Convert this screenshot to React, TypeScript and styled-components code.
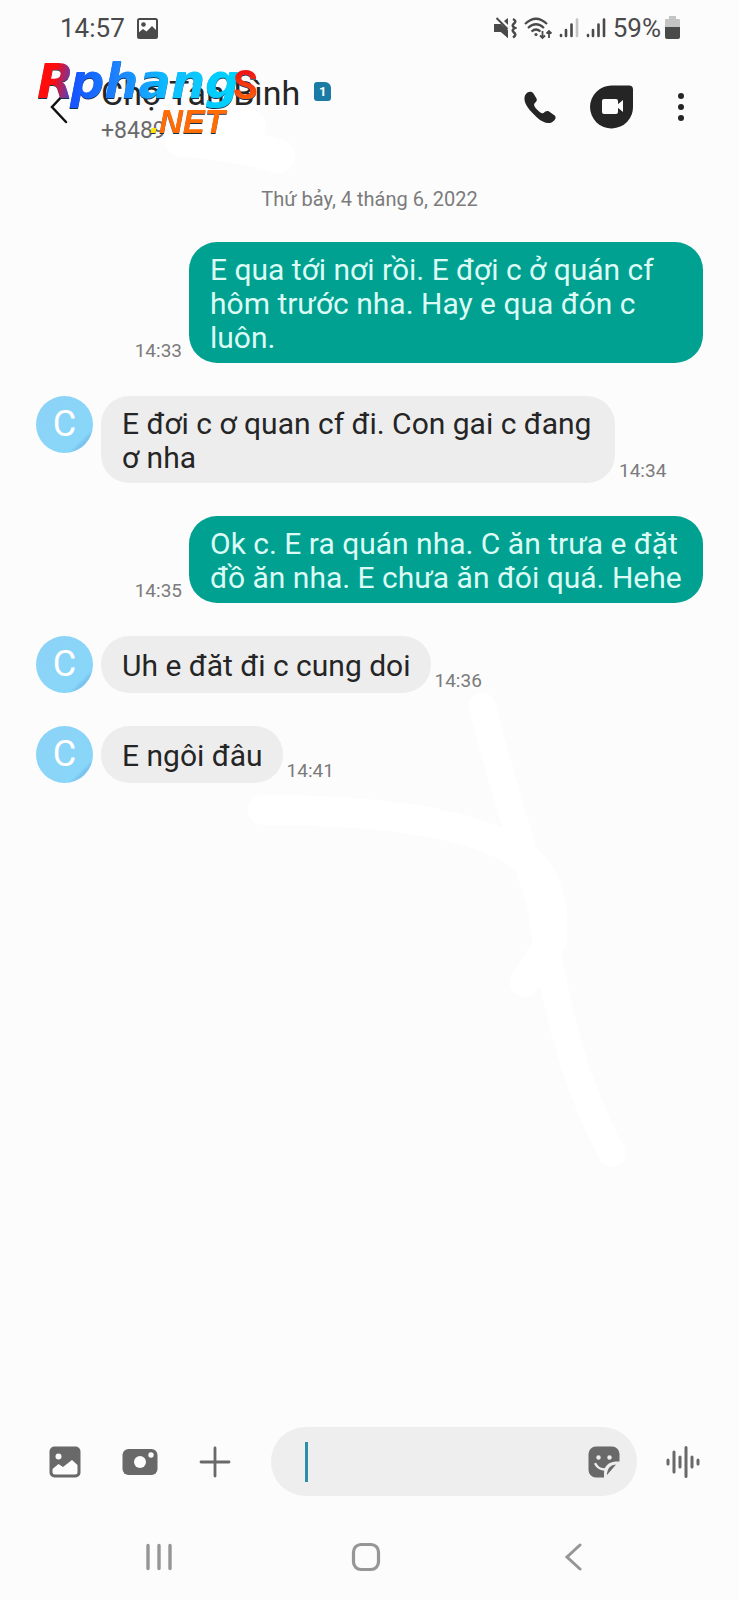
import React from "react";
import styled, { createGlobalStyle } from "styled-components";

const GlobalStyle = createGlobalStyle`
  * { box-sizing: border-box; }
  body {
    margin: 0;
    background: #fcfcfc;
    color: #252525;
    font-family: Roboto, "Noto Sans", sans-serif;
  }
`;

const Screen = styled.div`
  position: relative;
  display: flex;
  flex-direction: column;
  min-height: 100vh;
  overflow: hidden;
`;

const StatusBar = styled.div`
  display: flex;
  align-items: center;
  justify-content: space-between;
  height: 56px;
  padding: 0 58px 0 60px;
  color: #4a4a4a;
  font-size: 26px;
  line-height: 32px;
`;

const StatusGroup = styled.div<{ $gap: number }>`
  display: flex;
  align-items: center;
  gap: ${(p) => p.$gap}px;
`;

const Header = styled.header`
  position: relative;
  display: flex;
  align-items: center;
  height: 102px;
  padding: 0 33px 0 36px;
`;

const IconButton = styled.button<{ $w: number; $h: number; $color?: string }>`
  display: flex;
  align-items: center;
  justify-content: center;
  flex: none;
  width: ${(p) => p.$w}px;
  height: ${(p) => p.$h}px;
  padding: 0;
  border: 0;
  background: none;
  color: ${(p) => p.$color ?? "#252525"};
  cursor: pointer;
`;

const Contact = styled.div`
  display: flex;
  flex: 1;
  flex-direction: column;
  gap: 4px;
  min-width: 0;
  padding: 4px 0 0 19px;
`;

const NameRow = styled.div`
  display: flex;
  align-items: center;
  gap: 14px;
`;

const Name = styled.h1`
  margin: 0;
  font-size: 34px;
  font-weight: 400;
  line-height: 40px;
  white-space: nowrap;
`;

const SimBadge = styled.span`
  display: flex;
  align-items: center;
  justify-content: center;
  width: 17px;
  height: 19px;
  margin-bottom: 4px;
  border-radius: 3px 6px 3px 3px;
  background: #1a7ba4;
  color: #fff;
  font-size: 13px;
  font-weight: 700;
  line-height: 19px;
`;

const Phone = styled.div`
  color: #6a6a6a;
  font-size: 23px;
  line-height: 28px;
`;

const Actions = styled.div`
  display: flex;
  align-items: center;
  gap: 12px;
`;

const Logo = styled.svg`
  position: absolute;
  top: -20px;
  left: 20px;
  pointer-events: none;
`;

const Thread = styled.main`
  position: relative;
  display: flex;
  flex: 1;
  flex-direction: column;
  gap: 33px;
  padding: 31px 36px;
`;

const DateLabel = styled.div`
  color: #7b7b7b;
  font-size: 20px;
  line-height: 20px;
  text-align: center;
`;

const Row = styled.div<{ $own: boolean }>`
  display: flex;
  flex-direction: ${(p) => (p.$own ? "row-reverse" : "row")};
  align-items: flex-end;
  gap: ${(p) => (p.$own ? 7 : 4)}px;
`;

const Avatar = styled.div`
  display: flex;
  align-items: center;
  justify-content: center;
  align-self: flex-start;
  flex: none;
  width: 57px;
  height: 57px;
  margin-right: 4px;
  border-radius: 50%;
  background: linear-gradient(135deg, #8dd3f6 0%, #88d6f9 78%, #7cc4f0 82%);
  color: #fff;
  font-size: 36px;
  line-height: 57px;
`;

const Bubble = styled.div<{ $own: boolean }>`
  display: flex;
  align-items: center;
  max-width: 514px;
  min-height: 57px;
  padding: 11px 20px 8px 21px;
  border-radius: 28px;
  background: ${(p) => (p.$own ? "#00a191" : "#ededed")};
  color: ${(p) => (p.$own ? "#dcfbf5" : "#252525")};
  font-size: 30px;
  line-height: 34px;
`;

const Time = styled.time`
  flex: none;
  color: #7b7b7b;
  font-size: 19px;
  line-height: 24px;
`;

const Composer = styled.form`
  display: flex;
  align-items: center;
  padding: 0 29px 0 27px;
`;

const Field = styled.label`
  display: flex;
  align-items: center;
  flex: 1;
  min-width: 0;
  height: 69px;
  margin: 0 19px;
  padding: 0 9px 0 34px;
  border-radius: 35px;
  background: #eeeeee;
`;

const Caret = styled.span`
  flex: none;
  width: 3px;
  height: 40px;
  background: #2b8fac;
`;

const TextInput = styled.input`
  flex: 1;
  min-width: 0;
  border: 0;
  outline: 0;
  background: transparent;
  font: inherit;
  font-size: 30px;
`;

const NavBar = styled.nav`
  display: flex;
  align-items: center;
  justify-content: space-between;
  height: 104px;
  padding: 18px 126px 0 119px;
`;

const Smudges = styled.svg`
  position: absolute;
  top: 0;
  left: 0;
  pointer-events: none;
`;

type Message = { text: string; time: string; own: boolean };

const messages: Message[] = [
  { text: "E qua tới nơi rồi. E đợi c ở quán cf hôm trước nha. Hay e qua đón c luôn.", time: "14:33", own: true },
  { text: "E đơi c ơ quan cf đi. Con gai c đang ơ nha", time: "14:34", own: false },
  { text: "Ok c. E ra quán nha. C ăn trưa e đặt đồ ăn nha. E chưa ăn đói quá. Hehe", time: "14:35", own: true },
  { text: "Uh e đăt đi c cung doi", time: "14:36", own: false },
  { text: "E ngôi đâu", time: "14:41", own: false },
];

const Signal = ({ weakLast }: { weakLast?: boolean }) => (
  <svg width="20" height="22" viewBox="0 0 20 22" stroke="#4a4a4a" strokeWidth="2.600" strokeLinecap="round">
    <path d="M2 18v1M7 13v6M12.500 7.500v11.500" />
    <path d="M18 2.500v16.500" stroke={weakLast ? "#c4c4c4" : "#4a4a4a"} />
  </svg>
);

const SiteLogo = () => (
  <Logo width="270" height="130" viewBox="-10 -20 270 130" aria-label="Rphangs.NET">
    <defs>
      <linearGradient id="logoRed" x1="0" x2="1" y1="0" y2="0.3">
        <stop offset="0.55" stopColor="#ff0a0a" />
        <stop offset="1" stopColor="#5a3fc0" />
      </linearGradient>
      <linearGradient id="logoBlue" x1="0" x2="1" y1="0" y2="0">
        <stop offset="0" stopColor="#1450ff" />
        <stop offset="0.3" stopColor="#1c86ff" />
        <stop offset="0.6" stopColor="#0cc0ff" />
        <stop offset="1" stopColor="#00d4ff" />
      </linearGradient>
      <linearGradient id="logoS" x1="0" x2="0" y1="0" y2="1">
        <stop offset="0.2" stopColor="#f01414" />
        <stop offset="1" stopColor="#ff7a00" />
      </linearGradient>
      <filter id="logoShadow" x="-5%" y="-10%" width="110%" height="130%">
        <feDropShadow dx="0" dy="1" stdDeviation="0.500" floodColor="#15324a" />
      </filter>
    </defs>
    <g filter="url(#logoShadow)" fontFamily="'DejaVu Sans', sans-serif" fontWeight="700" fontStyle="italic">
      <text x="7" y="42" fontSize="48" fill="url(#logoRed)">R</text>
      <text x="40" y="42" fontSize="48" fill="url(#logoBlue)">phang</text>
      <text x="203" y="43" fontSize="40" fontFamily="Roboto, sans-serif" fontStyle="normal" fill="url(#logoS)">S</text>
      <g fontFamily="'Liberation Sans', sans-serif" fontSize="33">
        <text x="120" y="77" fill="#ffe600">.</text>
        <text x="129" y="77" fill="#ff6d05">NET</text>
      </g>
    </g>
  </Logo>
);

export default function App() {
  return (
    <Screen>
      <GlobalStyle />
      <Smudges width="739" height="1200" viewBox="0 0 739 1200" fill="none" stroke="#fff" strokeLinecap="round" strokeLinejoin="round" aria-hidden="true">
        <path d="M182 140Q230 142 278 156" strokeWidth="34" />
        <path d="M200 135L250 126" strokeWidth="32" />
        <path d="M263 810Q470 810 530 862Q556 890 552 940L525 982" strokeWidth="30" />
        <path d="M482 706Q515 830 540 900Q560 1060 612 1153" strokeWidth="27" />
      </Smudges>

      <StatusBar>
        <StatusGroup $gap={12}>
          <span>14:57</span>
          <svg width="21" height="21" viewBox="0 0 21 21">
            <rect x="1" y="1" width="19" height="19" rx="1.500" fill="none" stroke="#4a4a4a" strokeWidth="2" />
            <circle cx="6.500" cy="6.500" r="2.300" fill="#4a4a4a" />
            <path d="M1 15l5-4 3.500 2.500L15 8l5 5v7H1z" fill="#4a4a4a" />
          </svg>
        </StatusGroup>
        <StatusGroup $gap={7}>
          <svg width="23" height="22" viewBox="0 0 23 22" fill="#4a4a4a">
            <path d="M0 7h4l10 8v6l-7-6H0z" />
            <path d="M0 7h7l7 6v8l-7-6H0z" />
            <path d="M10 4l4-3v7z" />
            <path d="M2.500 1l11 11" stroke="#4a4a4a" strokeWidth="2" />
            <path d="M19 2q4 2 1 4.500t1 4.500q-4 2-1 4.500t-1 5" fill="none" stroke="#4a4a4a" strokeWidth="2.500" />
          </svg>
          <svg width="28" height="23" viewBox="0 0 28 23" fill="none" stroke="#4a4a4a" strokeWidth="2.200">
            <path d="M1 7Q12-3.500 23 7M4 11q8-7.500 16 0M7.500 14.500q4.500-4 9 0" />
            <circle cx="12" cy="17.500" r="1.600" fill="#4a4a4a" stroke="none" />
            <path d="M18.500 14v7M16 18.500l2.500 2.500 2.500-2.500M25 21v-7M22.500 16.500L25 14l2.500 2.500" strokeWidth="1.800" />
          </svg>
          <Signal weakLast />
          <Signal />
          <StatusGroup $gap={4}>
            <span>59%</span>
            <svg width="16" height="24" viewBox="0 0 16 24">
              <path d="M4 0h7v3h3a1 1 0 0 1 1 1v8H0V4a1 1 0 0 1 1-1h3z" fill="#c4c4c4" />
              <path d="M0 11h15v10a2 2 0 0 1-2 2H2a2 2 0 0 1-2-2z" fill="#4a4a4a" />
            </svg>
          </StatusGroup>
        </StatusGroup>
      </StatusBar>

      <Header>
        <IconButton $w={46} $h={50} aria-label="Back">
          <svg width="18" height="34" viewBox="0 0 18 34" fill="none" stroke="#111" strokeWidth="2.500" strokeLinecap="round">
            <path d="M16 2L2 17l14 15" />
          </svg>
        </IconButton>
        <Contact>
          <NameRow>
            <Name>Chợ Tân Bình</Name>
            <SimBadge>1</SimBadge>
          </NameRow>
          <Phone>+8489</Phone>
        </Contact>
        <Actions>
          <IconButton $w={56} $h={56} aria-label="Call">
            <svg width="32" height="33" viewBox="0 0 32 33" fill="#252525">
              <path d="M2 3C4 0 8 0 9.500 2.500L12.500 7.500C13.500 9.500 12 11 10.500 12.500C9.500 14 10.500 16 13 18.500C15.500 21 18 23 19.500 22C21 20.500 23 19.500 25 20.500L30 24C32.500 25.500 32 28.500 29 30.500C25 33.500 19 32 13 26.500C5 19 0 13 .500 7C.700 5 1 4 2 3z" />
            </svg>
          </IconButton>
          <IconButton $w={64} $h={56} aria-label="Video call">
            <svg width="44" height="44" viewBox="0 0 44 44">
              <path d="M22 .500h17a4 4 0 0 1 4 4V21A21.500 21.500 0 1 1 22 .500z" fill="#252525" />
              <rect x="12" y="14" width="16" height="15" rx="2" fill="#fcfcfc" />
              <path d="M27 20l6-5v12l-6-5z" fill="#fcfcfc" />
            </svg>
          </IconButton>
          <IconButton $w={50} $h={56} aria-label="More options">
            <svg width="8" height="30" viewBox="0 0 8 30" fill="#252525">
              <circle cx="4" cy="4" r="3" />
              <circle cx="4" cy="15" r="3" />
              <circle cx="4" cy="26" r="3" />
            </svg>
          </IconButton>
        </Actions>
        <SiteLogo />
      </Header>

      <Thread>
        <DateLabel>Thứ bảy, 4 tháng 6, 2022</DateLabel>
        {messages.map((m) => (
          <Row key={m.time} $own={m.own}>
            {!m.own && <Avatar>C</Avatar>}
            <Bubble $own={m.own}>{m.text}</Bubble>
            <Time>{m.time}</Time>
          </Row>
        ))}
      </Thread>

      <Composer onSubmit={(e) => e.preventDefault()}>
        <IconButton $w={75} $h={56} type="button" aria-label="Gallery">
          <svg width="32" height="32" viewBox="0 0 32 32">
            <rect x=".500" y=".500" width="31" height="31" rx="5" fill="#696969" />
            <circle cx="9.500" cy="10.500" r="3" fill="#fcfcfc" />
            <path d="M3.500 23l6-5 4.500 3 9-7 5.500 5v7a2.500 2.500 0 0 1-2.500 2.500H6A2.500 2.500 0 0 1 3.500 26z" fill="#fcfcfc" />
          </svg>
        </IconButton>
        <IconButton $w={75} $h={56} type="button" aria-label="Camera">
          <svg width="36" height="28" viewBox="0 0 36 28">
            <rect x=".500" y="1" width="35" height="26" rx="6" fill="#696969" />
            <circle cx="18" cy="14" r="6" fill="#fcfcfc" />
            <circle cx="29" cy="7" r="2.700" fill="#fcfcfc" />
          </svg>
        </IconButton>
        <IconButton $w={75} $h={56} type="button" aria-label="Add">
          <svg width="32" height="32" viewBox="0 0 32 32" stroke="#696969" strokeWidth="2.800" strokeLinecap="round">
            <path d="M16 2v28M2 16h28" />
          </svg>
        </IconButton>
        <Field>
          <Caret />
          <TextInput type="text" aria-label="Message" />
          <IconButton $w={48} $h={56} type="button" aria-label="Stickers">
            <svg width="32" height="32" viewBox="0 0 32 32">
              <path d="M8 .500h16a7.500 7.500 0 0 1 7.500 7.500v7.500h-4Q16 17 16 27v4.500H8A7.500 7.500 0 0 1 .500 24V8A7.500 7.500 0 0 1 8 .500z" fill="#696969" />
              <path d="M19 29v-2q1-8 9-8.500z" fill="#696969" />
              <circle cx="10.500" cy="11.500" r="2.200" fill="#eee" />
              <circle cx="21.500" cy="11.500" r="2.200" fill="#eee" />
              <path d="M7.500 18q3 5.500 9.500 5.500" fill="none" stroke="#eee" strokeWidth="2.500" strokeLinecap="round" />
            </svg>
          </IconButton>
        </Field>
        <IconButton $w={54} $h={56} type="button" aria-label="Voice message">
          <svg width="34" height="34" viewBox="0 0 34 34" stroke="#696969" strokeWidth="3" strokeLinecap="round">
            <path d="M2 15v4M8 7v20M14 12v10M20 2.500v29M26 12v10M32 15v4" />
          </svg>
        </IconButton>
      </Composer>

      <NavBar>
        <IconButton $w={80} $h={56} aria-label="Recent apps">
          <svg width="28" height="28" viewBox="0 0 28 28" stroke="#969696" strokeWidth="3.400" strokeLinecap="round">
            <path d="M3 2.500v23M14 2.500v23M25 2.500v23" />
          </svg>
        </IconButton>
        <IconButton $w={80} $h={56} aria-label="Home">
          <svg width="30" height="30" viewBox="0 0 30 30" fill="none" stroke="#969696" strokeWidth="3.200">
            <rect x="2.500" y="2.500" width="25" height="25" rx="7.500" />
          </svg>
        </IconButton>
        <IconButton $w={80} $h={56} aria-label="Back to previous screen">
          <svg width="18" height="28" viewBox="0 0 18 28" fill="none" stroke="#969696" strokeWidth="3" strokeLinecap="round">
            <path d="M16 2L3 14l13 12" />
          </svg>
        </IconButton>
      </NavBar>
    </Screen>
  );
}
